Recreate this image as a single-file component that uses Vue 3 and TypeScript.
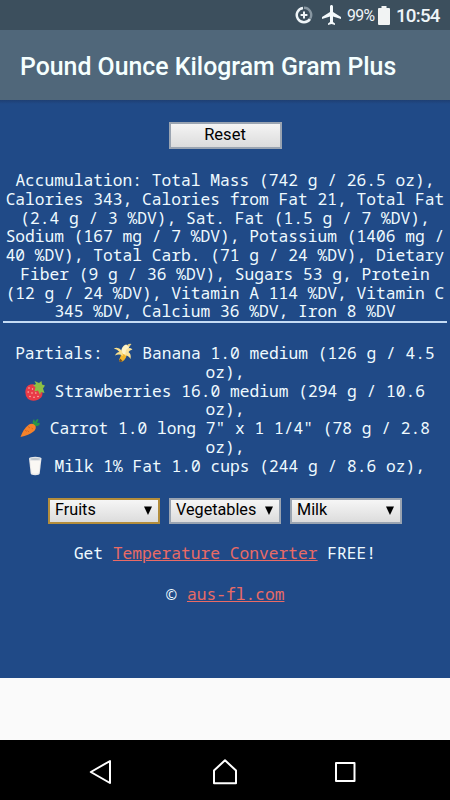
<script setup lang="ts">
interface Partial {
  icon: 'banana' | 'strawberry' | 'carrot' | 'milk'
  prefix: string
  text: string
}

const title = 'Pound Ounce Kilogram Gram Plus'

const accumulation: string = [
  'Accumulation: Total Mass (742 g / 26.5 oz),',
  'Calories 343, Calories from Fat 21, Total Fat',
  '(2.4 g / 3 %DV), Sat. Fat (1.5 g / 7 %DV),',
  'Sodium (167 mg / 7 %DV), Potassium (1406 mg /',
  '40 %DV), Total Carb. (71 g / 24 %DV), Dietary',
  'Fiber (9 g / 36 %DV), Sugars 53 g, Protein',
  '(12 g / 24 %DV), Vitamin A 114 %DV, Vitamin C',
  '345 %DV, Calcium 36 %DV, Iron 8 %DV',
].join('\n')

const partials: Partial[] = [
  { icon: 'banana', prefix: 'Partials: ', text: ' Banana 1.0 medium (126 g / 4.5\noz),' },
  { icon: 'strawberry', prefix: '', text: ' Strawberries 16.0 medium (294 g / 10.6\noz),' },
  { icon: 'carrot', prefix: '', text: ' Carrot 1.0 long 7" x 1 1/4" (78 g / 2.8\noz),' },
  { icon: 'milk', prefix: '', text: ' Milk 1% Fat 1.0 cups (244 g / 8.6 oz),' },
]

const categories: string[] = ['Fruits', 'Vegetables', 'Milk']
</script>

<template>
  <div class="screen">
    <div class="status">
      <svg class="saver" viewBox="0 0 18 18" width="18" height="18">
        <path d="M9 1.800A7.200 7.200 0 0 1 15.200 12.600" fill="none" stroke="#8796a1" stroke-width="2.4" />
        <path d="M8 1.900A7.200 7.200 0 1 0 15 13" fill="none" stroke="#eff5f8" stroke-width="2.5" />
        <path d="M9 5.600v6.800M5.600 9h6.800" stroke="#eff5f8" stroke-width="2" />
      </svg>
      <svg class="plane" viewBox="2 2 19 20" width="19" height="20">
        <path d="M21 16v-2l-8-5V3.500C13 2.670 12.330 2 11.500 2S10 2.670 10 3.500V9l-8 5v2l8-2.500V19l-2 1.500V22l3.500-1 3.500 1v-1.500L13 19v-5.500z" fill="#f4f9fb" />
      </svg>
      <span class="percent">99%</span>
      <svg class="battery" viewBox="0 0 12 19" width="12" height="19">
        <path d="M1 2h2.500V0h5v2H11q1 0 1 1v15q0 1-1 1H1q-1 0-1-1V3q0-1 1-1z" fill="#f1f3f3" />
      </svg>
      <span class="clock">10:54</span>
    </div>

    <header class="appbar"><h1>{{ title }}</h1></header>

    <main class="content">
      <button class="reset" type="button">Reset</button>

      <section class="accumulation">{{ accumulation }}</section>

      <section class="partials">
        <div v-for="p in partials" :key="p.icon">
          <span v-if="p.prefix">{{ p.prefix }}</span>
          <svg class="food" viewBox="0 0 20 20" width="20" height="20">
            <g v-if="p.icon === 'banana'">
              <path d="M8 8Q8.500 13 6 17L7 19Q12 18.500 13.500 13L13.500 8z" fill="#f2b62b" />
              <path d="M6 17.300L7 19Q8.500 19 9.500 18L7.500 15.800z" fill="#70512d" />
              <path d="M8 9Q8.500 3 13 1.500L16.500 3Q15 6 14.500 11Q11 13 8 9z" fill="#fff3c4" />
              <path d="M9 8Q5 3 .8 5.500Q4.500 6 6.500 9Q3.500 9 2 12.500Q6.500 10.500 10 13z" fill="#f9e08c" />
              <path d="M13 7Q16 3.500 19.500 6.500Q16.500 7 15.500 9Q18.500 11 17.500 16Q15.500 12 12 12.500z" fill="#fbe39a" />
              <path d="M14 2.300q2-2 4.500-1.300l-2.500 3z" fill="#e8cf86" />
            </g>
            <g v-else-if="p.icon === 'strawberry'">
              <path d="M.8 8Q2 3 8.500 3.300L17 9.500Q19 16 13 18.800Q7 21 3 18Q-.8 14 .8 8z" fill="#e93a46" />
              <path d="M8 4.500l3-1.500-1.500-3 4.500 2 2.500-2 .5 3.500 3 1-2 3 1.500 4.500-3.500-1-1 3-2-4.500-3.500 1 1-4.500z" fill="#8cc044" />
              <g fill="#ffc2b4">
                <circle cx="4" cy="7" r=".75" /><circle cx="7.500" cy="8" r=".75" />
                <circle cx="3.200" cy="11" r=".75" /><circle cx="7" cy="12" r=".75" />
                <circle cx="10.800" cy="12" r=".75" /><circle cx="5" cy="15.500" r=".75" />
                <circle cx="9" cy="16.300" r=".75" /><circle cx="13" cy="15.500" r=".75" />
              </g>
            </g>
            <g v-else-if="p.icon === 'carrot'">
              <path d="M13 7Q12 3 14 1L15 4Q17 0 18.500 1.500L17 5Q19.500 4 20 6Q18 9 14 8z" fill="#279447" />
              <path d="M.5 19Q3.500 10.500 9 6.500Q13 4.500 15.500 8Q16.500 11 13.500 13.500Q9 17 .5 19z" fill="#f5822a" />
              <path d="M8 8.500l2 1.500M5 12l2 1.500M9 14l-1.500-1.500M13 11l-1.500-1" stroke="#cf611e" stroke-width=".8" />
            </g>
            <g v-else>
              <path d="M4 2.500L5.700 17.500Q6 19.200 10.200 19.200T14.700 17.500L16.500 2.500z" fill="#e9e9e9" />
              <path d="M5.200 5L6.800 17Q10 18.300 13.700 17L15.300 5z" fill="#faf8f4" />
              <ellipse cx="10.250" cy="2.600" rx="6.200" ry="1.800" fill="#e3e6e8" />
              <ellipse cx="10.250" cy="3" rx="4.800" ry="1.100" fill="#bfc7cd" />
            </g>
          </svg>
          <span>{{ p.text }}</span>
        </div>
      </section>

      <div class="selects">
        <div v-for="(c, i) in categories" :key="c" class="select" :class="{ focused: i === 0 }">
          <span>{{ c }}</span>
          <svg viewBox="0 0 8 9" width="8" height="9"><path d="M0 .5h8L4 9z" fill="#000" /></svg>
        </div>
      </div>

      <p class="promo">Get <a>Temperature Converter</a> FREE!</p>
      <p class="copyright"><span class="mark">©</span> <a>aus-fl.com</a></p>
    </main>

    <nav class="navbar">
      <svg viewBox="0 0 24 26" width="24" height="26">
        <path d="M22 2v22L2.800 13z" fill="none" stroke="#fff" stroke-width="2" stroke-linejoin="round" />
      </svg>
      <svg class="home" viewBox="0 0 26 26" width="26" height="26">
        <path d="M13 1.300L24 11.500V24.300H2V11.500z" fill="none" stroke="#fff" stroke-width="2" stroke-linejoin="round" />
      </svg>
      <svg viewBox="0 0 22 22" width="22" height="22">
        <rect x="2" y="2" width="18.500" height="18" fill="none" stroke="#fff" stroke-width="2" stroke-linejoin="round" />
      </svg>
    </nav>
  </div>
</template>

<style>
body {
  margin: 0;
}
</style>

<style scoped>
.screen {
  width: 450px;
  height: 800px;
  display: flex;
  flex-direction: column;
  overflow: hidden;
  background: #fafafa;
  font-family: Roboto, sans-serif;
}
.status {
  height: 30px;
  flex: none;
  box-sizing: border-box;
  padding-right: 10px;
  display: flex;
  align-items: center;
  justify-content: flex-end;
  background: #3c4f5d;
  color: #eff5f8;
}
.plane {
  margin-left: 9px;
}
.percent {
  margin-left: 6px;
  width: 28px;
  padding-top: 1px;
  font-size: 15.800px;
  letter-spacing: -0.600px;
  white-space: nowrap;
}
.battery {
  margin-left: 3px;
}
.clock {
  margin-left: 6px;
  width: 44px;
  padding-top: 1px;
  font-size: 18.800px;
  font-weight: 500;
  letter-spacing: -0.800px;
  white-space: nowrap;
}
.appbar {
  height: 70px;
  flex: none;
  box-sizing: border-box;
  padding: 3px 0 0 20px;
  display: flex;
  align-items: center;
  background: #50677a;
}
h1 {
  margin: 0;
  color: #f5ffff;
  font-size: 24.850px;
  font-weight: 500;
  line-height: 33px;
  white-space: nowrap;
}
.content {
  height: 578px;
  flex: none;
  box-sizing: border-box;
  padding: 22px 2px 0;
  display: flex;
  flex-direction: column;
  align-items: center;
  background: linear-gradient(#1e3f73, #204a87 4px);
  color: #effaff;
  font-family: "Droid Sans Mono", "Noto Sans Mono", "DejaVu Sans Mono", monospace;
  font-size: 16.260px;
  line-height: 18.750px;
}
.reset {
  width: 113px;
  height: 27px;
  flex: none;
  padding: 0 0 2px;
  border: 2px solid #9aa4b1;
  background: linear-gradient(#f4f4f4, #dcdcdc);
  color: #000;
  font-family: Roboto, sans-serif;
  font-size: 16.500px;
}
.accumulation {
  width: 444px;
  margin-top: 22px;
  border-bottom: 2px solid #c5dcf5;
  text-align: center;
  white-space: pre;
}
.partials {
  margin-top: 21px;
  text-align: center;
  white-space: pre;
}
.food {
  margin: -3px 0;
  vertical-align: -1px;
}
.selects {
  margin-top: 23px;
  display: flex;
  gap: 9px;
}
.select {
  width: 112px;
  height: 26px;
  box-sizing: border-box;
  padding: 0 6px 2px 5px;
  display: flex;
  align-items: center;
  justify-content: space-between;
  border: 2px solid #9aa4b1;
  background: linear-gradient(#f6f6f6, #dcdcdc);
  color: #000;
  font-family: Roboto, sans-serif;
  font-size: 16.200px;
}
.select.focused {
  border-color: #b38d3c;
}
p {
  margin: 0;
  height: 18.750px;
  white-space: pre;
}
a {
  color: #ea6b65;
  text-decoration: underline;
}
.promo {
  margin-top: 20px;
}
.copyright {
  margin-top: 22px;
}
.mark {
  font-family: "Noto Sans", sans-serif;
  font-size: 14px;
}
.navbar {
  height: 60px;
  flex: none;
  box-sizing: border-box;
  margin-top: auto;
  padding: 3px 94px 0 88px;
  display: flex;
  align-items: center;
  justify-content: space-between;
  background: #000;
}
.home {
  margin-left: 4px;
}
</style>
